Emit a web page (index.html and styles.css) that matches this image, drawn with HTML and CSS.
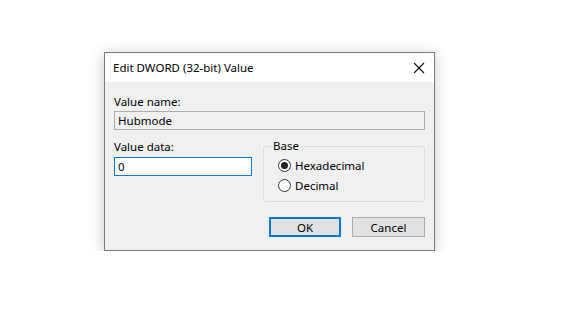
FILE: index.html
```html
<!DOCTYPE html>
<html lang="en">
<head>
  <meta charset="UTF-8" />
  <title>Edit DWORD (32-bit) Value</title>
  <link rel="stylesheet" href="styles.css">
</head>
<body>

<div class="dialog">
  <div class="titlebar">
    <span class="title">Edit DWORD (32-bit) Value</span>
    <svg class="close" width="12" height="12" viewBox="0 0 12 12">
      <path d="M1 1 L11 11 M11 1 L1 11" stroke="#111" stroke-width="1.1" fill="none" />
    </svg>
  </div>
  <div class="content">
    <div class="label">Value name:</div>
    <div class="field readonly">Hubmode</div>
    <div class="row">
      <div class="col-data">
        <div class="label">Value data:</div>
        <div class="field active">0</div>
      </div>
      <fieldset class="base">
        <legend>Base</legend>
        <div class="radio"><span class="dot checked"></span>Hexadecimal</div>
        <div class="radio"><span class="dot"></span>Decimal</div>
      </fieldset>
    </div>
    <div class="buttons">
      <button class="btn default">OK</button>
      <button class="btn">Cancel</button>
    </div>
  </div>
</div>

</body>
</html>
```

FILE: styles.css
```css
body {
  margin: 0;
  background: #fff;
  font-family: 'Noto Sans', 'Open Sans', sans-serif;
  font-size: 11.5px;
  color: #000;
}
.dialog {
  margin: 52px 0 0 104px;
  width: 331px;
  box-sizing: border-box;
  background: #f0f0f0;
  border: 1px solid #7a7a7a;
  box-shadow: 0 2px 14px rgba(0, 0, 0, 0.22);
}
.titlebar {
  height: 29px;
  background: #fff;
  display: flex;
  align-items: center;
  justify-content: space-between;
  padding: 0 8px 0 8px;
}
.title { line-height: 16px; }
.close { margin-right: 1px; }
.content { padding: 12px 9px 13px 9px; }
.label { line-height: 16px; }
.field {
  box-sizing: border-box;
  height: 19px;
  line-height: 17px;
  padding: 0 3px;
  border: 1px solid #a0a0a0;
  margin-top: 1px;
}
.readonly { background: #f0f0f0; border-color: #acacac; }
.active { background: #fff; border-color: #0078d7; margin-top: 2px; }
.row {
  display: flex;
  gap: 11px;
  margin-top: 9px;
}
.col-data { width: 138px; }
.base {
  flex: 1;
  margin: 0;
  padding: 1px 0 6px 14px;
  border: 1px solid #dcdcdc;
  border-radius: 2px;
  margin-top: -1px;
}
.base legend {
  padding: 0 2px;
  margin-left: -7px;
  line-height: 16px;
}
.radio {
  display: flex;
  align-items: center;
  height: 20px;
}
.dot {
  width: 11px;
  height: 11px;
  border: 1px solid #333;
  border-radius: 50%;
  background: #fff;
  margin-right: 4px;
  position: relative;
}
.dot.checked::after {
  content: "";
  position: absolute;
  left: 2px;
  top: 2px;
  width: 7px;
  height: 7px;
  border-radius: 50%;
  background: #222;
}
.buttons {
  display: flex;
  justify-content: flex-end;
  gap: 11px;
  margin-top: 15px;
}
.btn {
  box-sizing: border-box;
  width: 73px;
  height: 20px;
  background: #e1e1e1;
  border: 1px solid #adadad;
  font-family: inherit;
  font-size: 11.5px;
  padding: 0;
  color: #000;
}
.btn.default { width: 72px; border: 2px solid #0078d7; }
```
